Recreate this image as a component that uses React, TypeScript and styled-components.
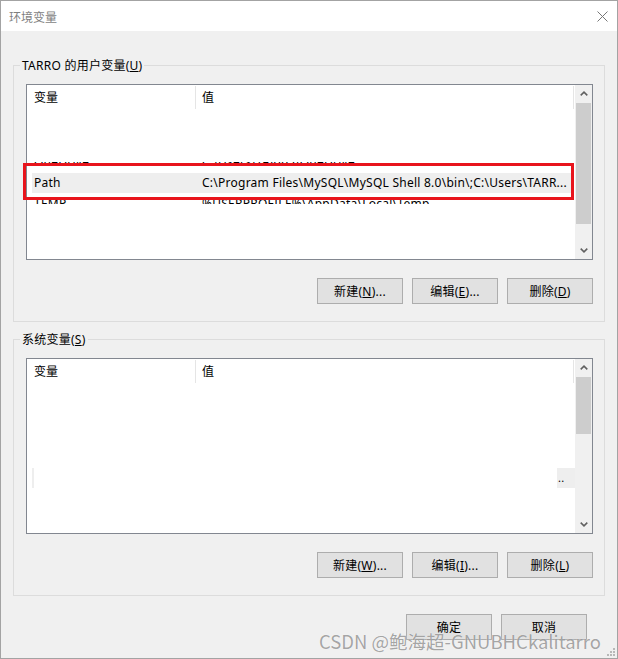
import React from "react";
import styled, { createGlobalStyle } from "styled-components";

const UI_FONT = `"Noto Sans", "Noto Sans CJK SC", sans-serif`;

const GlobalStyle = createGlobalStyle`
  *, *::before, *::after { box-sizing: border-box; }
  html, body { margin: 0; padding: 0; background: #ffffff; }
  body { font-family: ${UI_FONT}; font-size: 12px; letter-spacing: 0.25px; color: #000; }
`;

const Window = styled.div`
  position: relative;
  width: 618px;
  height: 659px;
  border: 1px solid #a3a3a3;
  background: #f0f0f0;
  display: flex;
  flex-direction: column;
  overflow: hidden;
`;

const TitleBar = styled.header`
  flex: none;
  height: 30px;
  background: #ffffff;
  display: flex;
  align-items: center;
  justify-content: space-between;
  padding: 0 9px 0 8px;
`;

const TitleText = styled.span`
  font-family: "Noto Sans CJK SC", sans-serif;
  font-size: 12px;
  letter-spacing: 0;
  color: #7f7f7f;
`;

const CloseIcon = styled.span`
  display: flex;
  width: 11px;
  height: 11px;
`;

const Body = styled.main`
  flex: 1;
  display: flex;
  flex-direction: column;
  padding-top: 34px;
`;

const Group = styled.section`
  margin: 0 12px;
  border: 1px solid #dcdcdc;
  padding: 0 11px 17px 12px;
  display: flex;
  flex-direction: column;
  & + & {
    margin-top: 17px;
  }
`;

const Legend = styled.div`
  align-self: flex-start;
  margin: -8px 0 0 -6px;
  padding: 0 2px;
  height: 16px;
  line-height: 16px;
  background: #f0f0f0;
  white-space: nowrap;
`;

const ListBox = styled.div`
  position: relative;
  margin-top: 10px;
  height: 176px;
  border: 1px solid #828790;
  background: #ffffff;
  display: flex;
`;

const ListContent = styled.div`
  flex: 1;
  min-width: 0;
  display: flex;
  flex-direction: column;
  overflow: hidden;
`;

const Header = styled.div`
  flex: none;
  height: 24px;
  display: grid;
  grid-template-columns: 168px 1px 377px 1px 1fr;
`;

const HeaderCell = styled.div<{ $pad: number }>`
  padding-left: ${(p) => p.$pad}px;
  line-height: 24px;
  font-family: "Noto Sans CJK SC", sans-serif;
  letter-spacing: 0;
  white-space: nowrap;
`;

const HeaderDivider = styled.div`
  margin-top: 1px;
  background: #e5e5e5;
`;

const Spacer = styled.div<{ $h: number }>`
  flex: none;
  height: ${(p) => p.$h}px;
`;

const Clip = styled.div<{ $h: number }>`
  flex: none;
  height: ${(p) => p.$h}px;
  overflow: hidden;
`;

const ClipInner = styled.div<{ $shift: number }>`
  padding-top: ${(p) => Math.max(p.$shift, 0)}px;
  margin-top: ${(p) => Math.min(p.$shift, 0)}px;
`;

const Row = styled.div<{ $selected?: boolean }>`
  flex: none;
  display: grid;
  grid-template-columns: 168px 1fr;
  height: 20px;
  line-height: 20px;
  margin-left: 5px;
  margin-right: 2px;
  background: ${(p) => (p.$selected ? "#eeeeee" : "transparent")};
  white-space: nowrap;
`;

const Cell = styled.span`
  padding-left: 2px;
  overflow: hidden;
`;

const Remnant = styled.div`
  flex: none;
  display: flex;
  height: 20px;
  margin-left: 5px;
`;

const RemnantEdge = styled.span<{ $w: number }>`
  width: ${(p) => p.$w}px;
  background: #eeeeee;
  line-height: 20px;
  padding-left: 1px;
  font-size: 11px;
  overflow: hidden;
`;

const RemnantGap = styled.span`
  flex: 1;
`;

const ScrollBar = styled.div`
  flex: none;
  width: 17px;
  background: #f0f0f0;
  display: flex;
  flex-direction: column;
`;

const ScrollArrow = styled.div`
  flex: none;
  height: 17px;
  display: flex;
  align-items: center;
  justify-content: center;
`;

const Track = styled.div`
  flex: 1;
  display: flex;
  flex-direction: column;
`;

const Thumb = styled.div<{ $offset: number; $size: number }>`
  margin: ${(p) => p.$offset}px 1px 0;
  height: ${(p) => p.$size}px;
  background: #cdcdcd;
`;

const Annotation = styled.div`
  position: absolute;
  left: -4px;
  top: 78px;
  width: 551px;
  height: 37px;
  border: 3px solid #e8141c;
  pointer-events: none;
`;

const ButtonRow = styled.div`
  display: flex;
  justify-content: flex-end;
  gap: 9px;
  margin-top: 18px;
`;

const Button = styled.button`
  width: 86px;
  height: 26px;
  padding: 0;
  border: 1px solid #adadad;
  background: #e1e1e1;
  font-family: ${UI_FONT};
  font-size: 12px;
  letter-spacing: 0.25px;
  color: #000;
  white-space: nowrap;
`;

const Footer = styled.footer`
  display: flex;
  justify-content: flex-end;
  gap: 9px;
  padding: 18px 30px 0 0;
`;

const Watermark = styled.div`
  position: absolute;
  left: 318px;
  top: 630px;
  font-family: "Noto Sans CJK SC", sans-serif;
  font-size: 18.5px;
  line-height: 20px;
  letter-spacing: 0;
  color: rgba(90, 90, 90, 0.55);
  text-shadow: 0 0 1px rgba(255, 255, 255, 0.9);
  white-space: nowrap;
  pointer-events: none;
`;

const SizeGrip = styled.span`
  position: absolute;
  right: 1px;
  bottom: 1px;
  display: flex;
`;

const Chevron = ({ dir }: { dir: "up" | "down" }) => (
  <svg width="8" height="5" viewBox="0 0 8 5">
    <path
      d={dir === "up" ? "M0.7 4.4 L4 1.1 L7.3 4.4" : "M0.7 0.6 L4 3.9 L7.3 0.6"}
      fill="none"
      stroke="#606060"
      strokeWidth="1.5"
    />
  </svg>
);

type Scroll = { offset: number; size: number };

const ScrollBarView = ({ thumb }: { thumb: Scroll }) => (
  <ScrollBar>
    <ScrollArrow>
      <Chevron dir="up" />
    </ScrollArrow>
    <Track>
      <Thumb $offset={thumb.offset} $size={thumb.size} />
    </Track>
    <ScrollArrow>
      <Chevron dir="down" />
    </ScrollArrow>
  </ScrollBar>
);

const ListHeader = () => (
  <Header>
    <HeaderCell $pad={7}>变量</HeaderCell>
    <HeaderDivider />
    <HeaderCell $pad={6}>值</HeaderCell>
    <HeaderDivider />
    <div />
  </Header>
);

const Key = ({ label, k, suffix = "" }: { label: string; k: string; suffix?: string }) => (
  <>
    {label}(<u>{k}</u>){suffix}
  </>
);

export default function App() {
  return (
    <>
      <GlobalStyle />
      <Window>
        <TitleBar>
          <TitleText>环境变量</TitleText>
          <CloseIcon>
            <svg width="11" height="11" viewBox="0 0 11 11">
              <path d="M0.5 0.5 L10.5 10.5 M10.5 0.5 L0.5 10.5" stroke="#777" strokeWidth="1" />
            </svg>
          </CloseIcon>
        </TitleBar>
        <Body>
          <Group>
            <Legend>
              TARRO 的用户变量(<u>U</u>)
            </Legend>
            <ListBox>
              <ListContent>
                <ListHeader />
                <Spacer $h={53} />
                <Clip $h={11}>
                  <ClipInner $shift={-10}>
                    <Row>
                      <Cell>OneDrive</Cell>
                      <Cell>C:\Users\TARRO\OneDrive</Cell>
                    </Row>
                  </ClipInner>
                </Clip>
                <Row $selected>
                  <Cell>Path</Cell>
                  <Cell>C:\Program Files\MySQL\MySQL Shell 8.0\bin\;C:\Users\TARR...</Cell>
                </Row>
                <Clip $h={11}>
                  <ClipInner $shift={1}>
                    <Row>
                      <Cell>TEMP</Cell>
                      <Cell>%USERPROFILE%\AppData\Local\Temp</Cell>
                    </Row>
                  </ClipInner>
                </Clip>
              </ListContent>
              <ScrollBarView thumb={{ offset: 1, size: 121 }} />
              <Annotation />
            </ListBox>
            <ButtonRow>
              <Button><Key label="新建" k="N" suffix="..." /></Button>
              <Button><Key label="编辑" k="E" suffix="..." /></Button>
              <Button><Key label="删除" k="D" /></Button>
            </ButtonRow>
          </Group>
          <Group>
            <Legend>
              系统变量(<u>S</u>)
            </Legend>
            <ListBox>
              <ListContent>
                <ListHeader />
                <Spacer $h={85} />
                <Remnant>
                  <RemnantEdge $w={2} />
                  <RemnantGap />
                  <RemnantEdge $w={18}>..</RemnantEdge>
                </Remnant>
              </ListContent>
              <ScrollBarView thumb={{ offset: 1, size: 57 }} />
            </ListBox>
            <ButtonRow>
              <Button><Key label="新建" k="W" suffix="..." /></Button>
              <Button><Key label="编辑" k="I" suffix="..." /></Button>
              <Button><Key label="删除" k="L" /></Button>
            </ButtonRow>
          </Group>
          <Footer>
            <Button>确定</Button>
            <Button>取消</Button>
          </Footer>
        </Body>
        <Watermark>CSDN @鲍海超-GNUBHCkalitarro</Watermark>
        <SizeGrip>
          <svg width="10" height="10" viewBox="0 0 10 10">
            <g fill="#b8b8b8">
              <rect x="7" y="1" width="2" height="2" />
              <rect x="4" y="4" width="2" height="2" />
              <rect x="7" y="4" width="2" height="2" />
              <rect x="1" y="7" width="2" height="2" />
              <rect x="4" y="7" width="2" height="2" />
              <rect x="7" y="7" width="2" height="2" />
            </g>
          </svg>
        </SizeGrip>
      </Window>
    </>
  );
}
